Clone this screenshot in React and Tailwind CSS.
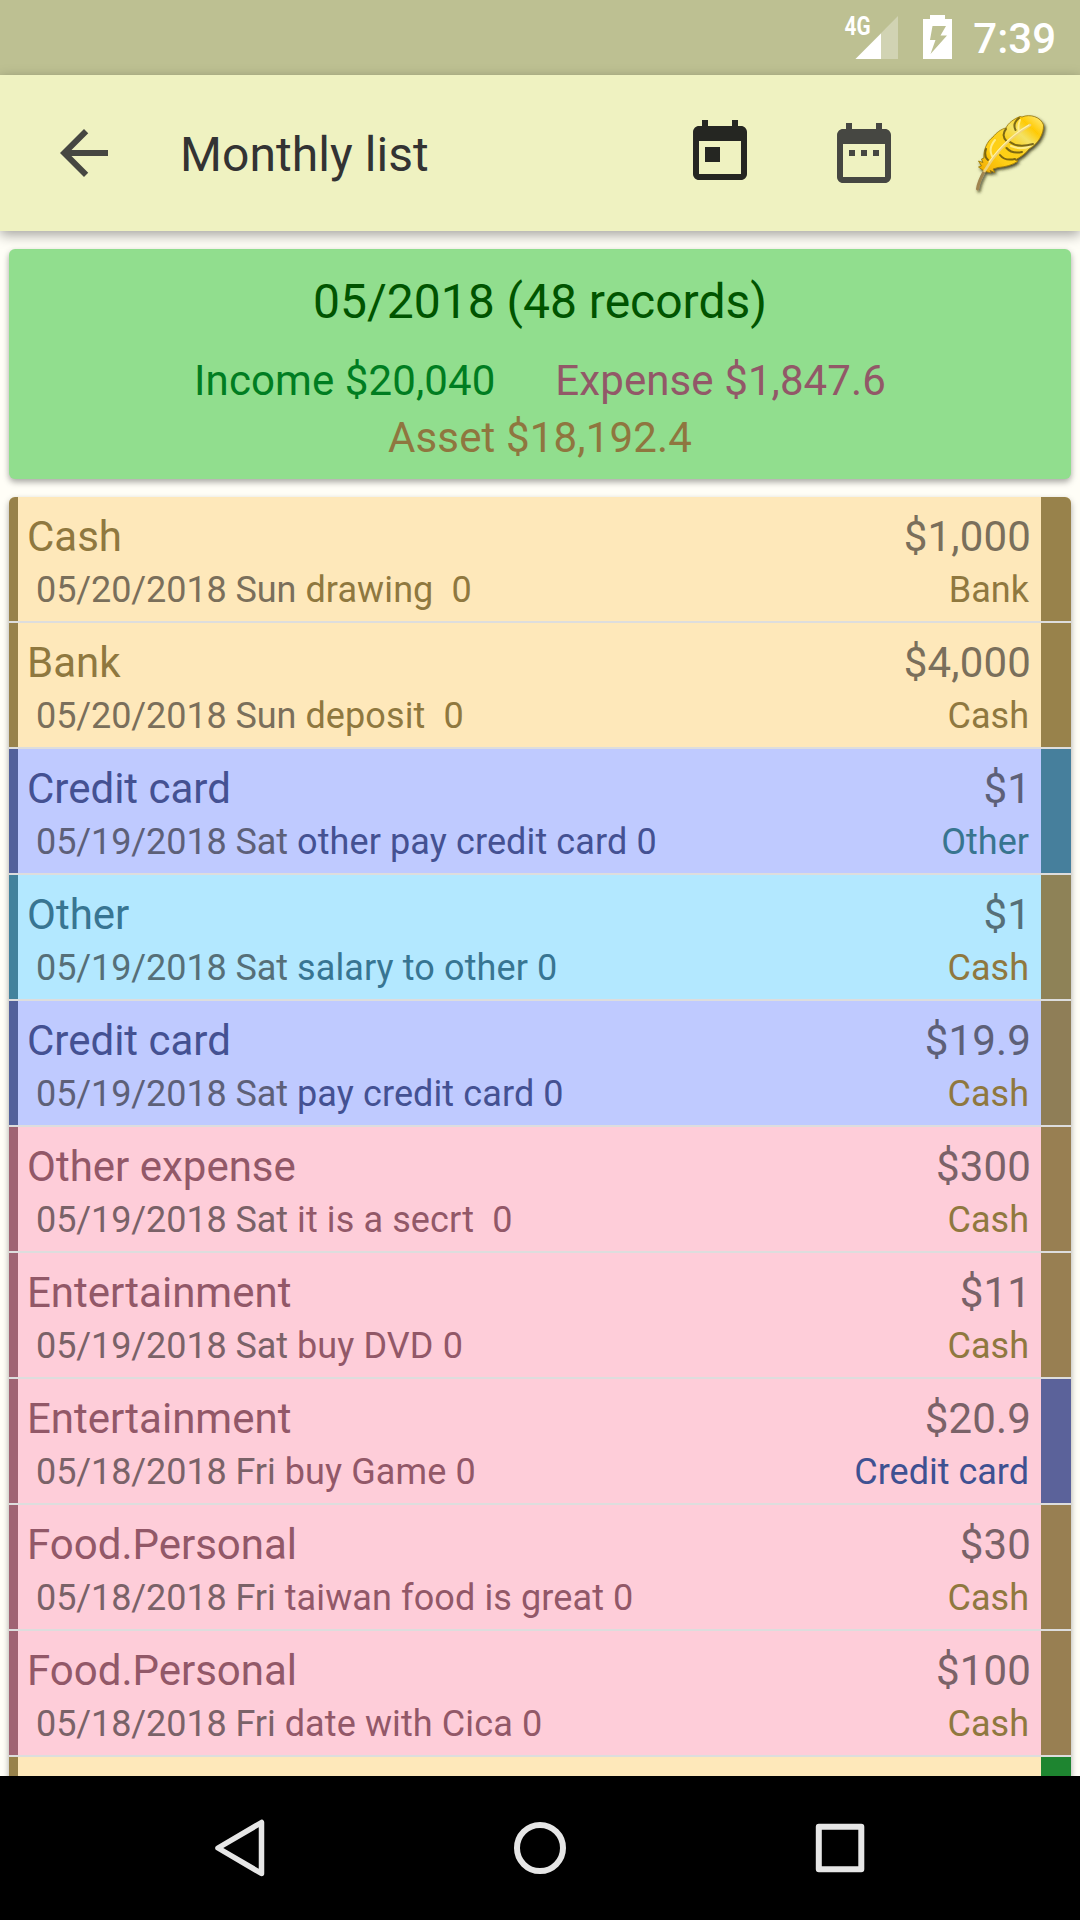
const C = {
  sand: { bg: 'bg-[#fee8ba]', bar: 'bg-[#98824b]', text: 'text-[#8f783f]', date: 'text-[#7a6f5b]' },
  blue: { bg: 'bg-[#bfcaff]', bar: 'bg-[#53619b]', text: 'text-[#445192]', date: 'text-[#5d6078]' },
  cyan: { bg: 'bg-[#b3e8ff]', bar: 'bg-[#43829c]', text: 'text-[#387592]', date: 'text-[#566f78]' },
  pink: { bg: 'bg-[#fecdd9]', bar: 'bg-[#a06373]', text: 'text-[#925868]', date: 'text-[#7a6268]' },
};

const OLIVE = 'text-[#8f783f]';

const rows = [
  { t: C.sand, name: 'Cash', amount: '$1,000', date: '05/20/2018 Sun', note: 'drawing  0', acct: 'Bank', acctCls: OLIVE, end: 'bg-[#98824b]' },
  { t: C.sand, name: 'Bank', amount: '$4,000', date: '05/20/2018 Sun', note: 'deposit  0', acct: 'Cash', acctCls: OLIVE, end: 'bg-[#98824b]' },
  { t: C.blue, name: 'Credit card', amount: '$1', date: '05/19/2018 Sat', note: 'other pay credit card 0', acct: 'Other', acctCls: 'text-[#38758f]', end: 'bg-[#467f9c]' },
  { t: C.cyan, name: 'Other', amount: '$1', date: '05/19/2018 Sat', note: 'salary to other 0', acct: 'Cash', acctCls: OLIVE, end: 'bg-[#8e8257]' },
  { t: C.blue, name: 'Credit card', amount: '$19.9', date: '05/19/2018 Sat', note: 'pay credit card 0', acct: 'Cash', acctCls: OLIVE, end: 'bg-[#8f7e57]' },
  { t: C.pink, name: 'Other expense', amount: '$300', date: '05/19/2018 Sat', note: 'it is a secrt  0', acct: 'Cash', acctCls: OLIVE, end: 'bg-[#987f52]' },
  { t: C.pink, name: 'Entertainment', amount: '$11', date: '05/19/2018 Sat', note: 'buy DVD 0', acct: 'Cash', acctCls: OLIVE, end: 'bg-[#987f52]' },
  { t: C.pink, name: 'Entertainment', amount: '$20.9', date: '05/18/2018 Fri', note: 'buy Game 0', acct: 'Credit card', acctCls: 'text-[#3f5192]', end: 'bg-[#5b629a]' },
  { t: C.pink, name: 'Food.Personal', amount: '$30', date: '05/18/2018 Fri', note: 'taiwan food is great 0', acct: 'Cash', acctCls: OLIVE, end: 'bg-[#987f52]' },
  { t: C.pink, name: 'Food.Personal', amount: '$100', date: '05/18/2018 Fri', note: 'date with Cica 0', acct: 'Cash', acctCls: OLIVE, end: 'bg-[#987f52]' },
];

function StatusBar() {
  return (
    <div className="flex h-[75px] shrink-0 items-start justify-end bg-[#bdc092] pr-[24px] text-white">
      <svg className="mt-[4px] mr-[24px] h-[60px] w-[55px] overflow-visible" viewBox="844 4 55 60">
        <path d="M898 16V59H855.5Z" fill="#fff" fillOpacity=".3" />
        <path d="M881 33.5V59H855.5Z" fill="#fff" />
        <text x="844.5" y="35.2" fontSize="25" fontWeight="700" fontFamily="Roboto" textLength="26" lengthAdjust="spacingAndGlyphs" fill="#fff">4G</text>
      </svg>
      <svg className="mt-[15px] mr-[21px] h-[44px] w-[29px]" viewBox="0 0 29 44">
        <path fillRule="evenodd" d="M7 0H22V4H29V44H0V4H7ZM9.500 11 7 25H12.500L7.500 39 24 20.500H17.500L23 11Z" fill="#fff" />
      </svg>
      <span className="mt-[15px] text-[42px] leading-[48px] font-medium">7:39</span>
    </div>
  );
}

function Feather() {
  return (
    <svg className="h-[90px] w-[84px] overflow-visible" viewBox="970 110 84 90">
      <defs>
        <linearGradient id="vane" x1="0" y1="1" x2="1" y2="0">
          <stop offset="0" stopColor="#f0a800" />
          <stop offset=".3" stopColor="#ffcf14" />
          <stop offset=".5" stopColor="#fbd01c" />
          <stop offset=".66" stopColor="#f3e266" />
          <stop offset=".8" stopColor="#ffca04" />
          <stop offset="1" stopColor="#fff08a" />
        </linearGradient>
        <filter id="drop" x="-20%" y="-20%" width="150%" height="150%">
          <feDropShadow dx="1.500" dy="2" stdDeviation="1.400" floodColor="#2c2a08" floodOpacity=".85" />
        </filter>
        <filter id="soft">
          <feGaussianBlur stdDeviation=".5" />
        </filter>
      </defs>
      <g filter="url(#drop)">
        <path d="M985 170C981 177 978 184 977.500 189" fill="none" stroke="#a08550" strokeWidth="3" strokeLinecap="round" />
        <path d="M984 171 978.500 167 981.500 166 978.500 161 983 162.500 981.500 159 984 158C983 151 987 141 993 137 996 133 1001 129 1006 128 1008 123 1014 119 1019 117L1020 116.500 1022 117C1030 113.500 1041 117 1043.500 125 1044 134 1038 144 1029 149 1026 153 1021 157 1015 160L1018 161C1013 165 1005 167 998 167.500L993 169 995 172.500 990 170.500 991 173Z" fill="url(#vane)" stroke="#957508" strokeWidth=".8" />
      </g>
      <g fill="none" strokeLinecap="round" filter="url(#soft)">
        <path d="M1020 120C1018 125 1018 128 1019 131M995 140C990 146 990 152 992 156M1011 146C1018 149 1024 149 1030 146" stroke="#fff3a0" strokeWidth="2" strokeOpacity=".8" />
        <path d="M1019 118C1014 122 1013.500 126 1015.500 130M1006 129C1002.500 133 1003 138 1006.500 141M986 149C984.500 154 985.500 158 988 160M1010 142C1015 146 1022 147 1033 144M1006.500 148C1010 152 1015 153.500 1022 152M1000 155C1003 159 1008 160.500 1015 159" stroke="#66560f" strokeOpacity=".85" strokeWidth="2" />
        <path d="M1030 125C1016 133 999 147 984.500 171" stroke="#efd27a" strokeWidth="2.600" />
        <path d="M1029 125C1016 132 1000 146 989 162" stroke="#fff4ac" strokeWidth="1.100" />
      </g>
    </svg>
  );
}

function Toolbar() {
  return (
    <div className="relative z-10 flex h-[156px] shrink-0 items-center bg-[#eff2c1] shadow-[0_4px_12px_rgba(0,0,0,0.36)]">
      <svg className="ml-[48px] h-[72px] w-[72px]" viewBox="0 0 24 24">
        <path d="M20 11H7.830l5.590-5.590L12 4l-8 8 8 8 1.410-1.410L7.830 13H20z" fill="#464742" />
      </svg>
      <h1 className="mt-[4px] ml-[60px] flex-1 text-[48px] leading-[56px] tracking-[0.06px] text-[#333]">Monthly list</h1>
      <svg className="h-[72px] w-[72px]" viewBox="0 0 24 24">
        <path d="M19 3h-1V1h-2v2H8V1H6v2H5c-1.110 0-1.990.9-1.990 2L3 19c0 1.100.890 2 2 2h14c1.100 0 2-.9 2-2V5c0-1.100-.9-2-2-2zm0 16H5V8h14v11zM7 10h5v5H7z" fill="#252622" />
      </svg>
      <svg className="ml-[72px] h-[72px] w-[72px]" viewBox="0 0 24 24">
        <path d="M9 11H7v2h2v-2zm4 0h-2v2h2v-2zm4 0h-2v2h2v-2zm2-7h-1V2h-2v2H8V2H6v2H5c-1.110 0-1.990.9-1.990 2L3 20c0 1.100.890 2 2 2h14c1.100 0 2-.9 2-2V6c0-1.100-.9-2-2-2zm0 16H5V9h14v11z" fill="#464742" />
      </svg>
      <div className="mt-[4px] mr-[26px] ml-[70px] h-[90px] w-[84px]">
        <Feather />
      </div>
    </div>
  );
}

function Summary() {
  return (
    <section className="mx-[9px] mt-[18px] flex h-[230px] shrink-0 flex-col items-center rounded-[6px] bg-[#91de8e] pt-[24px] shadow-[0_3px_6px_rgba(0,0,0,0.35)]">
      <h2 className="text-[48px] leading-[58px] text-[#005400]">05/2018 (48 records)</h2>
      <div className="mt-[21px] flex gap-[60px] text-[42px] leading-[57px] tracking-[0.09px]">
        <span className="text-[#007d21]">Income $20,040</span>
        <span className="text-[#925868]">Expense $1,847.6</span>
      </div>
      <div className="text-[42px] leading-[57px] tracking-[0.15px] text-[#8f763f]">Asset $18,192.4</div>
    </section>
  );
}

function Row({ r }) {
  return (
    <li className={`flex h-[126px] shrink-0 border-b-2 border-[#dddddd] ${r.t.bg}`}>
      <div className={`w-[9px] ${r.t.bar}`} />
      <div className="flex flex-1 flex-col pt-[11px] pr-[10px] pl-[9px]">
        <div className="flex justify-between text-[42px] leading-[58px]">
          <span className={r.t.text}>{r.name}</span>
          <span className={`tracking-[0.15px] ${r.t.date}`}>{r.amount}</span>
        </div>
        <div className="flex justify-between pr-[2px] pl-[9px] text-[36px] leading-[48px] whitespace-pre">
          <span className={`tracking-[0.11px] ${r.t.text}`}>
            <span className={`tracking-[-0.09px] ${r.t.date}`}>{r.date}</span> {r.note}
          </span>
          <span className={r.acctCls}>{r.acct}</span>
        </div>
      </div>
      <div className={`w-[30px] ${r.end}`} />
    </li>
  );
}

function NavBar() {
  return (
    <nav className="relative z-10 flex h-[144px] shrink-0 items-center justify-center gap-[228px] bg-black">
      <svg className="h-[72px] w-[72px]" viewBox="0 0 72 72" fill="none" stroke="#e6e6e6" strokeWidth="5.500" strokeLinejoin="round">
        <path d="M57.500 10.500V61.500L14 36Z" />
      </svg>
      <svg className="h-[72px] w-[72px]" viewBox="0 0 72 72" fill="none" stroke="#e6e6e6" strokeWidth="6">
        <circle cx="36" cy="36" r="23" />
      </svg>
      <svg className="h-[72px] w-[72px]" viewBox="0 0 72 72" fill="none" stroke="#e6e6e6" strokeWidth="6" strokeLinejoin="round">
        <rect x="14.800" y="14.800" width="42.500" height="42.500" />
      </svg>
    </nav>
  );
}

export default function App() {
  return (
    <div className="flex h-[1920px] w-[1080px] flex-col overflow-hidden bg-[#fffef7] font-['Roboto',sans-serif]">
      <StatusBar />
      <Toolbar />
      <main className="flex min-h-0 flex-1 flex-col overflow-hidden">
        <Summary />
        <div className="mx-[9px] mt-[18px] shrink-0 rounded-t-[6px] shadow-[0_3px_6px_rgba(0,0,0,0.35)]">
          <ul className="flex flex-col overflow-hidden rounded-t-[6px]">
            {rows.map((r, i) => (
              <Row key={i} r={r} />
            ))}
            <li className="flex h-[124px] bg-[#fee8ba]">
              <div className="w-[9px] bg-[#98824b]" />
              <div className="flex-1" />
              <div className="w-[30px] bg-[#1e8530]" />
            </li>
          </ul>
        </div>
      </main>
      <NavBar />
    </div>
  );
}
